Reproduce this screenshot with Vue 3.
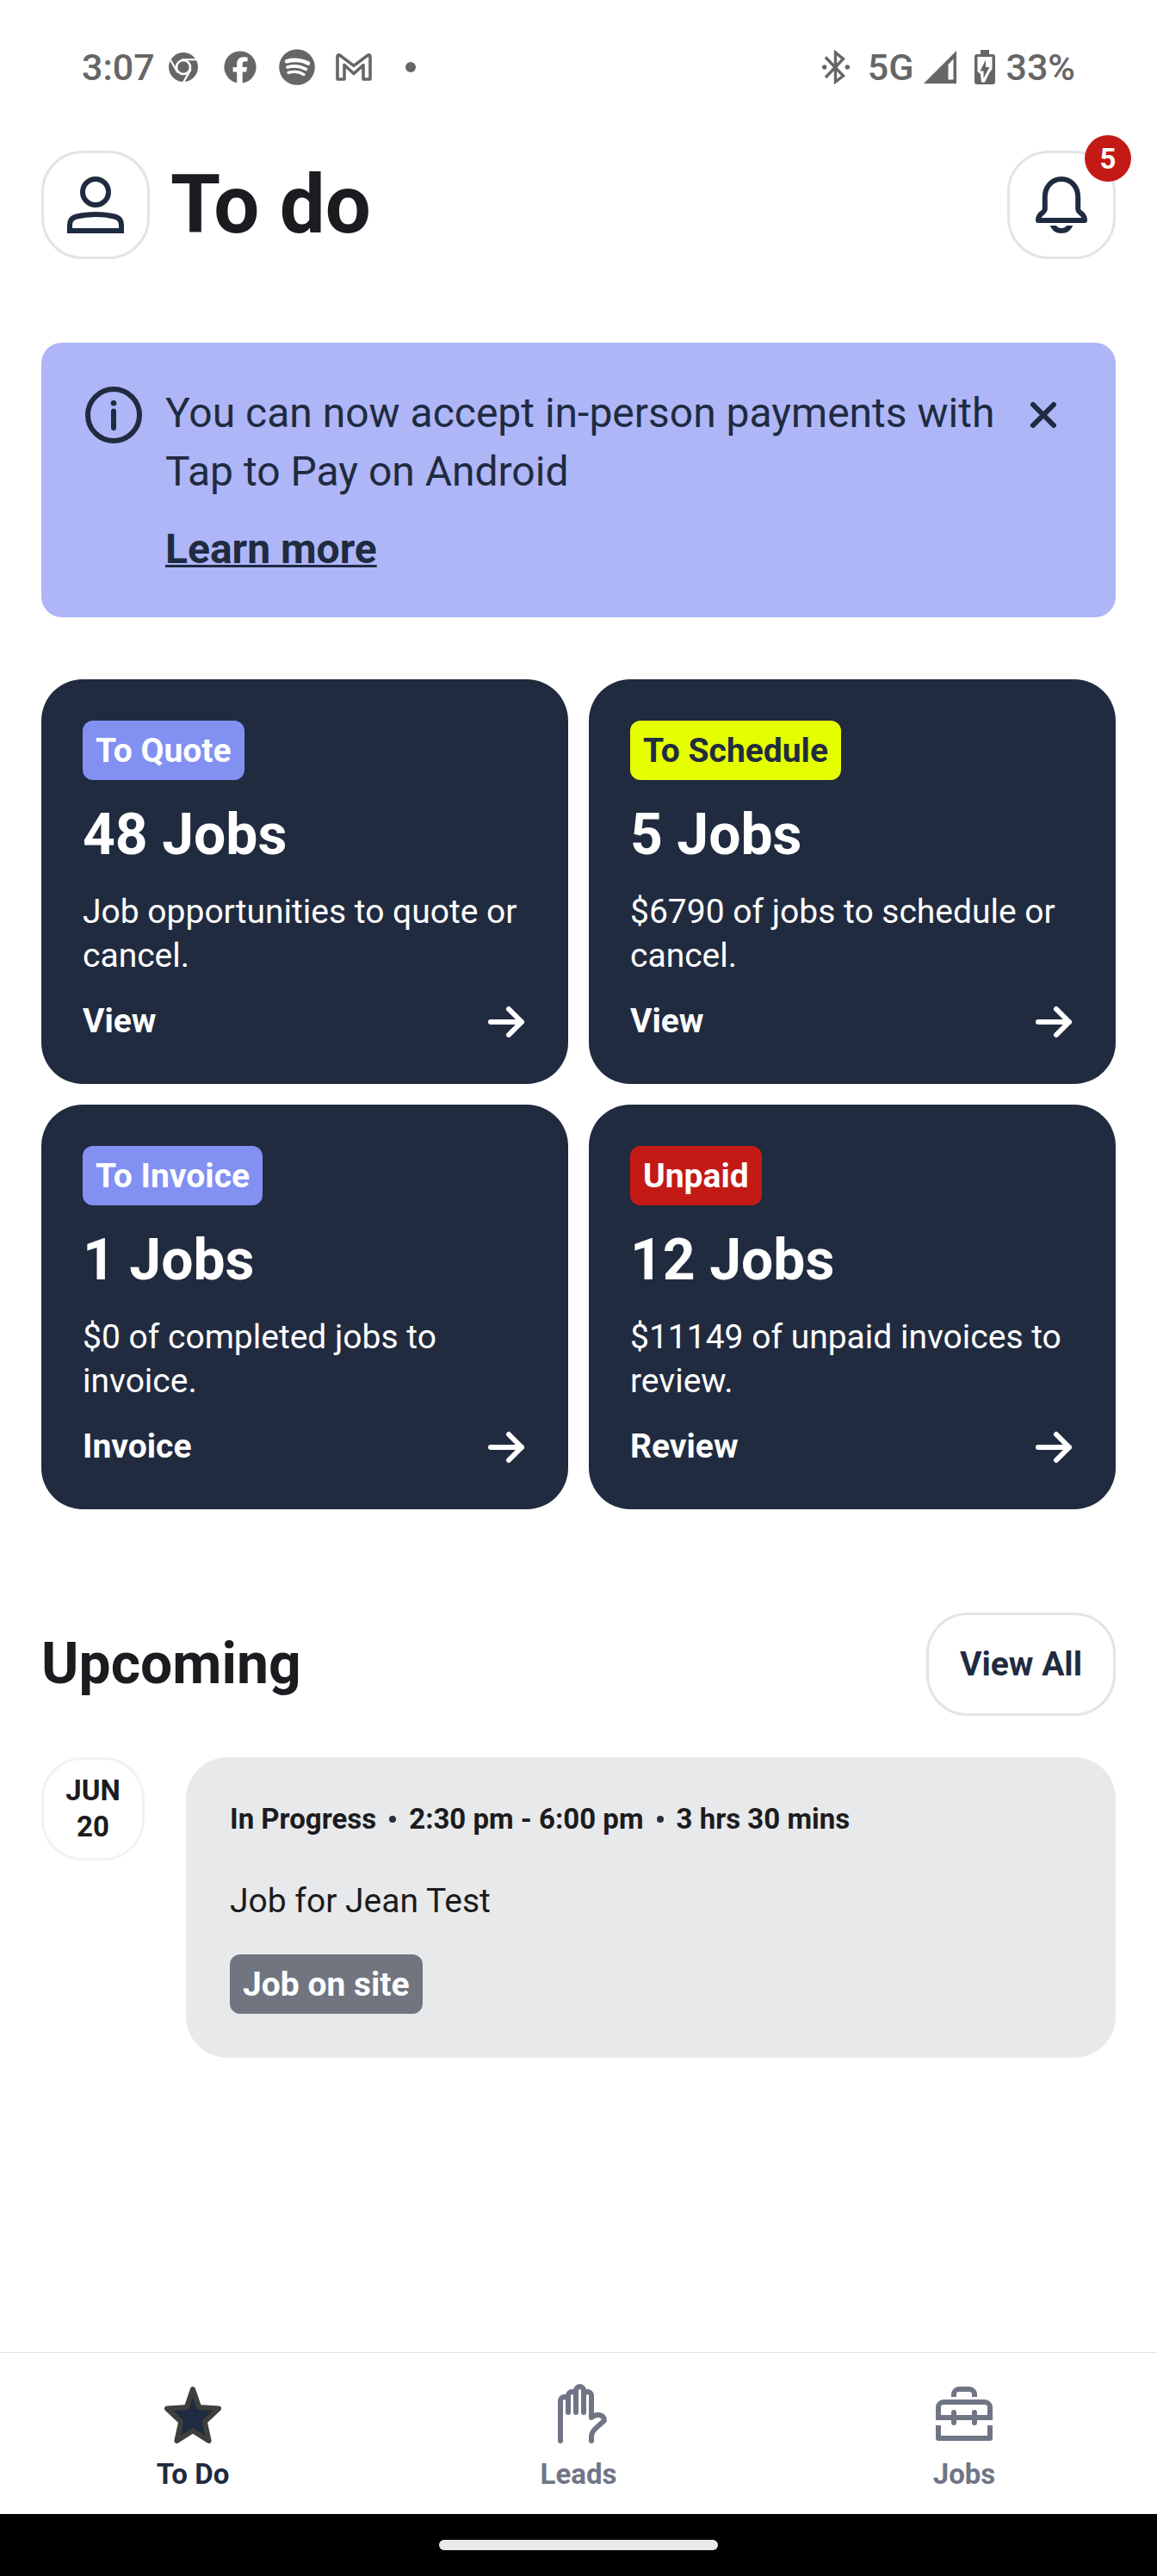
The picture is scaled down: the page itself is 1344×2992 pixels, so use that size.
<script setup>
import { ref } from 'vue'

const bannerOpen = ref(true)
const notifications = 5

const stats = [
  { tag: 'To Quote', tone: 'indigo', title: '48 Jobs', text: 'Job opportunities to quote or cancel.', action: 'View' },
  { tag: 'To Schedule', tone: 'lime', title: '5 Jobs', text: '$6790 of jobs to schedule or cancel.', action: 'View' },
  { tag: 'To Invoice', tone: 'indigo', title: '1 Jobs', text: '$0 of completed jobs to invoice.', action: 'Invoice' },
  { tag: 'Unpaid', tone: 'red', title: '12 Jobs', text: '$11149 of unpaid invoices to review.', action: 'Review' },
]

const meta = ['In Progress', '2:30 pm - 6:00 pm', '3 hrs 30 mins']
</script>

<template>
  <div class="screen">
    <div class="status">
      <span>3:07</span>
      <ul class="status-apps">
        <li>
          <svg width="34" height="34" viewBox="0 0 34 34">
            <circle cx="17" cy="17" r="17" fill="#666" />
            <circle cx="17" cy="17" r="8" fill="#666" stroke="#fff" stroke-width="2.6" />
            <g stroke="#fff" stroke-width="2.2">
              <path d="M15 8.2H34" />
              <path d="M15 8.2H34" transform="rotate(120 17 17)" />
              <path d="M15 8.2H34" transform="rotate(240 17 17)" />
            </g>
          </svg>
        </li>
        <li>
          <svg width="38" height="38" viewBox="0 0 38 38">
            <circle cx="19" cy="19" r="18.6" fill="#666" />
            <path fill="#fff" d="M15.2 38V24.4H10.6V19H15.2V15C15.2 10 18 7.2 22.6 7.2C24.6 7.2 27.6 7.5 27.6 7.5V12.2H25C22.5 12.2 21.7 13.6 21.7 15.4V19H27L26.2 24.4H21.7V38Z" />
          </svg>
        </li>
        <li>
          <svg width="42" height="42" viewBox="0 0 42 42" fill="none" stroke="#fff" stroke-linecap="round">
            <circle cx="21" cy="21" r="20.8" fill="#666" stroke="none" />
            <path d="M9 14.2C17 11.8 27 12.6 34 16.6" stroke-width="4.6" />
            <path d="M10 21C17 19 25 19.8 31.4 23.4" stroke-width="3.8" />
            <path d="M11 27.4C17 25.8 24 26.4 29 29.6" stroke-width="3.2" />
          </svg>
        </li>
        <li>
          <svg width="42" height="34" viewBox="0 0 42 34" fill="none" stroke="#666" stroke-width="3.6" stroke-linejoin="round">
            <path d="M2 31V5Q2 1.6 5.4 3.6L21 15.4L36.600 3.600Q40 1.600 40 5V31H32V14.500L21 24.500L10 14.500V31Z" />
          </svg>
        </li>
        <li><i class="status-dot"></i></li>
      </ul>
      <div class="status-right">
        <svg width="32" height="40" viewBox="0 0 32 40" fill="none" stroke="#666" stroke-width="3.4">
          <path d="M4 8.500L24.500 30L15.500 37V3L24.500 10.500L4 32" stroke-linejoin="miter" />
          <circle cx="2.700" cy="20" r="2.700" fill="#666" stroke="none" />
          <circle cx="29.300" cy="20" r="2.700" fill="#666" stroke="none" />
        </svg>
        <span class="status-net">5G</span>
        <svg width="38" height="38" viewBox="0 0 38 38">
          <path fill="#666" fill-rule="evenodd" d="M38 0V38H0ZM34.500 9.500L28.500 16V33.500H34.500Z" />
        </svg>
        <svg class="status-battery" width="24" height="40" viewBox="0 0 24 40">
          <path fill="#666" d="M7 0H17V5H21Q24 5 24 8V37Q24 40 21 40H3Q0 40 0 37V8Q0 5 3 5H7Z" />
          <path fill="#fff" d="M3.500 8H20.500V22L17 27L12 37.500H8L7 28L3.500 25Z" />
          <path fill="#666" d="M13 11.500V20H17.500L10.500 33V24.500H6.500Z" />
        </svg>
        <span>33%</span>
      </div>
    </div>

    <header class="header">
      <button class="icon-button" type="button" aria-label="Profile">
        <svg class="icon" viewBox="0 0 24 24">
          <ellipse cx="12" cy="7" rx="5" ry="5" />
          <path d="M2 22V19.800C2 17.900 3 16.900 4.600 16.500C9 15.350 15 15.350 19.400 16.500C21 16.900 22 17.900 22 19.800V22Z" />
        </svg>
      </button>
      <h1>To do</h1>
      <button class="icon-button bell" type="button" aria-label="Notifications">
        <svg class="icon" viewBox="0 0 24 24">
          <path stroke-linejoin="round" d="M12 2C8.300 2 5.600 5 5.600 9V13.700C5.600 14.300 5.300 14.500 4.800 14.900C3.700 15.700 3 16.700 3 17.700V18H21V17.700C21 16.700 20.300 15.700 19.200 14.900C18.700 14.500 18.400 14.300 18.400 13.700V9C18.400 5 15.700 2 12 2Z" />
          <path class="solid" d="M7.600 20H10C10.400 20.700 11.100 21 12 21C12.900 21 13.600 20.700 14 20H16.400C15.700 21.900 14.100 23 12 23C9.900 23 8.300 21.900 7.600 20Z" />
        </svg>
        <span class="count">{{ notifications }}</span>
      </button>
    </header>

    <main class="main">
      <section v-if="bannerOpen" class="banner">
        <svg class="icon" viewBox="0 0 24 24">
          <circle cx="12" cy="12" r="10" />
          <circle class="solid" cx="12" cy="7.400" r="1.100" />
          <path stroke-linecap="round" d="M12 10.500V17" />
        </svg>
        <div class="banner-body">
          <p>You can now accept in-person payments with Tap to Pay on Android</p>
          <a href="#">Learn more</a>
        </div>
        <button class="close" type="button" aria-label="Dismiss" @click="bannerOpen = false">
          <svg class="icon" viewBox="0 0 24 24">
            <path stroke-linecap="round" d="M8 8L16 16M16 8L8 16" />
          </svg>
        </button>
      </section>

      <section class="stats">
        <article v-for="s in stats" :key="s.tag" class="stat">
          <span class="tag" :class="s.tone">{{ s.tag }}</span>
          <h2>{{ s.title }}</h2>
          <p>{{ s.text }}</p>
          <a href="#">
            {{ s.action }}
            <svg class="arrow" viewBox="0 0 16 16">
              <path d="M2 8H14M9 3L14 8L9 13" />
            </svg>
          </a>
        </article>
      </section>

      <section class="upcoming">
        <div class="section-head">
          <h2>Upcoming</h2>
          <button class="view-all" type="button">View All</button>
        </div>
        <div class="event-row">
          <time class="date" datetime="06-20"><span>JUN</span><span>20</span></time>
          <article class="event">
            <div class="meta"><span v-for="m in meta" :key="m">{{ m }}</span></div>
            <h3>Job for Jean Test</h3>
            <span class="tag slate">Job on site</span>
          </article>
        </div>
      </section>
    </main>

    <nav class="tabs">
      <a href="#" class="tab active">
        <svg class="icon star" viewBox="0 0 24 24">
          <path d="M12 2L14.400 9L22 9.500L16.600 14.600L18.200 22L12 18.100L5.800 22L7.400 14.600L2 9.500L9.600 9Z" />
        </svg>
        To Do
      </a>
      <a href="#" class="tab">
        <svg class="icon" viewBox="0 0 24 24" stroke-linecap="round" stroke-linejoin="round">
          <path d="M5 22V6.500A1.500 1.500 0 0 1 8 6.500" />
          <path d="M8 11V4.500A1.500 1.500 0 0 1 11 4.500" />
          <path d="M11 11V2.500A1.500 1.500 0 0 1 14 2.500V11" />
          <path d="M14 4.500A1.500 1.500 0 0 1 17 4.500V13C18.400 11.900 19.600 11.800 20.500 12.100C21.600 12.400 22 13.300 22 14.200L19 16.800C17.700 17.900 17 19 17 20.400V22" />
        </svg>
        Leads
      </a>
      <a href="#" class="tab">
        <svg class="icon" viewBox="0 0 24 24">
          <path d="M8 5V4A2 2 0 0 1 10 2H14A2 2 0 0 1 16 4V5" />
          <path d="M2 13V9A2 2 0 0 1 4 7H20A2 2 0 0 1 22 9V13Z" />
          <path stroke-linecap="round" d="M8 11V15M16 11V15" />
          <path stroke-linejoin="round" d="M2 16V21H22V16" />
        </svg>
        Jobs
      </a>
    </nav>
    <div class="gesture"><i></i></div>
  </div>
</template>

<style>
body {
  margin: 0;
  background: #fff;
}
</style>

<style scoped>
.screen {
  display: flex;
  flex-direction: column;
  min-height: 100vh;
  background: #fff;
  color: #1c1b20;
  font-family: Roboto, "Liberation Sans", sans-serif;
}

h1, h2, h3, p, ul {
  margin: 0;
  padding: 0;
}

a {
  color: inherit;
  text-decoration: none;
}

button {
  box-sizing: border-box;
  padding: 0;
  border: 0;
  background: none;
  color: inherit;
  font: inherit;
  cursor: pointer;
}

svg {
  display: block;
  flex: none;
}

.icon {
  width: 72px;
  height: 72px;
  fill: none;
  stroke: currentColor;
  stroke-width: 2;
}

.solid {
  fill: currentColor;
  stroke: none;
}

.status {
  display: flex;
  align-items: center;
  height: 155px;
  padding: 0 95px;
  color: #666;
  font-size: 43px;
  line-height: 48px;
  font-weight: 500;
}

.status-apps {
  display: flex;
  list-style: none;
}

.status-apps li {
  display: flex;
  align-items: center;
  justify-content: center;
  width: 66px;
}

.status-dot {
  width: 12px;
  height: 12px;
  border-radius: 50%;
  background: #666;
}

.status-right {
  display: flex;
  align-items: center;
  margin-left: auto;
}

.status-net {
  margin: 0 12px 0 21px;
}

.status-battery {
  margin: 0 12px 0 21px;
}

.header {
  display: flex;
  align-items: center;
  gap: 24px;
  padding: 20px 48px 0;
}

h1 {
  font-size: 94px;
  line-height: 112px;
  font-weight: 700;
}

.icon-button {
  display: flex;
  align-items: center;
  justify-content: center;
  width: 126px;
  height: 126px;
  border: 3px solid #e3e3e8;
  border-radius: 48px;
  color: #1f2b40;
}

.bell {
  position: relative;
  margin-left: auto;
}

.count {
  position: absolute;
  top: -21px;
  right: -21px;
  width: 54px;
  height: 54px;
  border-radius: 50%;
  background: #c41a16;
  color: #fff;
  font-size: 33px;
  line-height: 56px;
  font-weight: 700;
  text-align: center;
}

.main {
  flex: 1;
  padding: 97px 48px 72px;
}

.banner {
  display: flex;
  align-items: flex-start;
  padding: 48px;
  border-radius: 24px;
  background: #aeb6f8;
  color: #1f2b40;
  font-size: 48px;
}

.banner-body {
  flex: 1;
  margin-left: 24px;
}

.banner p {
  line-height: 68px;
}

.banner a {
  display: block;
  width: fit-content;
  margin-top: 24px;
  line-height: 63px;
  font-weight: 700;
  text-decoration: underline;
  text-decoration-thickness: 3px;
}

.stats {
  display: grid;
  grid-template-columns: 1fr 1fr;
  gap: 24px;
  margin-top: 72px;
}

.stat {
  display: flex;
  flex-direction: column;
  align-items: flex-start;
  padding: 48px;
  border-radius: 48px;
  background: #212b3f;
  color: #fff;
  font-size: 39px;
}

.tag {
  display: inline-block;
  padding: 12px 15px 11px;
  border-radius: 12px;
  font-size: 39px;
  line-height: 46px;
  font-weight: 700;
  color: #fff;
}

.indigo { background: #8290f2; }
.lime { background: #e5ff00; color: #212b3f; }
.red { background: #c41a16; }
.slate { background: #707580; }

h2 {
  font-size: 66px;
  line-height: 80px;
  font-weight: 700;
}

.stat h2 {
  margin-top: 24px;
}

.stat p {
  margin-top: 24px;
  line-height: 51px;
}

.stat a {
  display: flex;
  justify-content: space-between;
  align-self: stretch;
  margin-top: 27px;
  line-height: 46px;
  font-weight: 700;
}

.arrow {
  width: 48px;
  height: 48px;
  fill: none;
  stroke: currentColor;
  stroke-width: 2;
  stroke-linecap: round;
  stroke-linejoin: round;
}

.upcoming {
  margin-top: 120px;
}

.section-head {
  display: flex;
  align-items: center;
  justify-content: space-between;
}

.view-all {
  height: 120px;
  padding: 0 36px;
  border: 3px solid #e3e3e8;
  border-radius: 48px;
  color: #1f2b40;
  font-size: 39px;
  font-weight: 700;
}

.event-row {
  display: flex;
  align-items: flex-start;
  gap: 48px;
  margin-top: 48px;
}

.date {
  box-sizing: border-box;
  display: flex;
  flex: none;
  flex-direction: column;
  align-items: center;
  justify-content: center;
  width: 120px;
  height: 120px;
  border: 3px solid #f2f2f3;
  border-radius: 48px;
  font-size: 33px;
  line-height: 42px;
  font-weight: 700;
}

.event {
  flex: 1;
  display: flex;
  flex-direction: column;
  align-items: flex-start;
  padding: 51px;
  border-radius: 48px;
  background: #e8e9eb;
  color: #1c1c1e;
}

.meta {
  display: flex;
  align-items: center;
  font-size: 33px;
  line-height: 42px;
  font-weight: 700;
}

.meta span {
  display: flex;
  align-items: center;
}

.meta span + span::before {
  content: "";
  width: 8px;
  height: 8px;
  margin: 0 15px;
  border-radius: 50%;
  background: #2a2d3e;
}

h3 {
  margin-top: 48px;
  font-size: 39px;
  line-height: 52px;
  font-weight: 400;
}

.event .tag {
  margin-top: 36px;
}

.tabs {
  display: flex;
  border-top: 1px solid #e3e3e8;
}

.tab {
  display: flex;
  flex: 1;
  flex-direction: column;
  align-items: center;
  gap: 12px;
  padding: 36px 0 25px;
  color: #707586;
  font-size: 33px;
  line-height: 42px;
  font-weight: 700;
}

.tab.active {
  color: #1f2b40;
}

.star {
  fill: #1f2b40;
  stroke: #3f3f3b;
  stroke-linejoin: round;
}

.gesture {
  display: flex;
  align-items: center;
  justify-content: center;
  height: 72px;
  background: #000;
}

.gesture i {
  width: 324px;
  height: 12px;
  border-radius: 6px;
  background: #eaeaea;
}
</style>
